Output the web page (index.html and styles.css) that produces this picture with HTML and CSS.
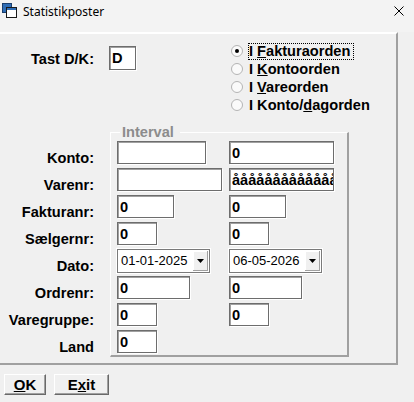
FILE: index.html
```html
<!DOCTYPE html>
<html lang="da">
<head>
    <meta charset="UTF-8">
    <meta name="viewport" content="width=device-width, initial-scale=1.0">
    <title>Statistikposter</title>
    <link rel="stylesheet" href="styles.css">
</head>
<body>
    <div class="titlebar">
        <svg class="app-icon" viewBox="0 0 16 16" width="16" height="16">
            <rect x="0.5" y="0.5" width="9" height="9" fill="#2f6db5" stroke="#1b3f6e"/>
            <rect x="4.5" y="4.5" width="10" height="10" fill="#fff" stroke="#1a1a1a"/>
            <rect x="5" y="5" width="9" height="2" fill="#2f6db5"/>
        </svg>
        <span class="title">Statistikposter</span>
        <svg class="close" viewBox="0 0 10 10" width="10" height="10">
            <path d="M0.5 0.5 L9.5 9.5 M9.5 0.5 L0.5 9.5" stroke="#000" stroke-width="1" fill="none"/>
        </svg>
    </div>

    <div class="panel">
        <div class="top">
            <label for="dk" class="label tast-label">Tast D/K:</label>
            <input type="text" id="dk" class="field tast" value="D">
            <ul class="radios">
                <li class="radio checked"><span class="dot"></span><span class="radio-text focus">I <u>F</u>akturaorden</span></li>
                <li class="radio"><span class="dot"></span><span class="radio-text">I <u>K</u>ontoorden</span></li>
                <li class="radio"><span class="dot"></span><span class="radio-text">I <u>V</u>areorden</span></li>
                <li class="radio"><span class="dot"></span><span class="radio-text">I Konto/<u>d</u>agorden</span></li>
            </ul>
        </div>

        <div class="filters">
            <div class="labels">
                <span>Konto:</span>
                <span>Varenr:</span>
                <span>Fakturanr:</span>
                <span>Sælgernr:</span>
                <span>Dato:</span>
                <span>Ordrenr:</span>
                <span>Varegruppe:</span>
                <span>Land</span>
            </div>

            <fieldset class="interval">
                <legend>Interval</legend>
                <div class="grid">
                    <input type="text" class="field w89" value="">
                    <input type="text" class="field w105" value="0">

                    <input type="text" class="field w105" value="">
                    <input type="text" class="field w105" value="åååååååååååååååå">

                    <input type="text" class="field w57" value="0">
                    <input type="text" class="field w57" value="0">

                    <input type="text" class="field w40" value="0">
                    <input type="text" class="field w40" value="0">

                    <div class="combo">
                        <span class="combo-value">01-01-2025</span>
                        <span class="drop"><svg viewBox="0 0 7 4" width="7" height="4"><polygon points="0,0 7,0 3.5,4" fill="#000"/></svg></span>
                    </div>
                    <div class="combo">
                        <span class="combo-value">06-05-2026</span>
                        <span class="drop"><svg viewBox="0 0 7 4" width="7" height="4"><polygon points="0,0 7,0 3.5,4" fill="#000"/></svg></span>
                    </div>

                    <input type="text" class="field w73" value="0">
                    <input type="text" class="field w73" value="0">

                    <input type="text" class="field w40" value="0">
                    <input type="text" class="field w40" value="0">

                    <input type="text" class="field w40" value="0">
                </div>
            </fieldset>
        </div>
    </div>

    <div class="buttons">
        <button type="button" class="btn btn-ok"><u>O</u>K</button>
        <button type="button" class="btn btn-exit">E<u>x</u>it</button>
    </div>
</body>
</html>
```

FILE: styles.css
```css
body {
    margin: 0;
    background-color: #f0f0f0;
    font-family: "Liberation Sans", Arial, sans-serif;
    font-size: 14.6px;
    font-weight: bold;
    color: #000;
}
.titlebar {
    display: flex;
    align-items: flex-start;
    height: 32px;
    background-color: #f3f3f3;
}
.app-icon {
    margin: 3px 0 0 2px;
}
.title {
    margin: 4px 0 0 5px;
    font-family: "Noto Sans", sans-serif;
    font-weight: normal;
    font-size: 12px;
    line-height: 16px;
}
.close {
    margin: 6px 10px 0 auto;
}
.panel {
    width: 396px;
    height: 329px;
    border-top: 2px solid #fff;
    border-right: 2px solid #a0a0a0;
    border-bottom: 2px solid #a0a0a0;
}
.top {
    display: flex;
    align-items: flex-start;
}
.tast-label {
    display: block;
    width: 94px;
    margin-top: 17px;
    text-align: right;
    line-height: 16px;
}
.field {
    box-sizing: border-box;
    height: 23px;
    margin: 0;
    padding: 0 0 0 2px;
    border: 1px solid #6d6d6d;
    box-shadow: inset 1px 1px 0 #a0a0a0, 1px 1px 0 #fff;
    background-color: #fff;
    font-family: "Liberation Sans", Arial, sans-serif;
    font-size: 14.6px;
    font-weight: bold;
    color: #000;
    outline: none;
}
.tast {
    width: 27px;
    height: 24px;
    margin: 12px 0 0 15px;
}
.radios {
    list-style: none;
    margin: 8px 0 0 95px;
    padding: 0;
}
.radio {
    display: flex;
    align-items: center;
    height: 18px;
}
.dot {
    position: relative;
    box-sizing: border-box;
    width: 12px;
    height: 12px;
    margin-right: 5px;
    border: 1px solid #b4b4b4;
    border-radius: 50%;
    background-color: #fafafa;
}
.checked .dot::after {
    content: "";
    position: absolute;
    left: 3px;
    top: 3px;
    width: 4px;
    height: 4px;
    border-radius: 50%;
    background-color: #000;
}
.radio-text {
    line-height: 15px;
    padding: 0 3px 0 0;
    border: 1px dotted transparent;
}
.radio-text.focus {
    border-color: #000;
}
.filters {
    display: flex;
    align-items: flex-start;
    margin-top: 10px;
}
.labels {
    display: flex;
    flex-direction: column;
    align-items: flex-end;
    gap: 4px;
    width: 94px;
    padding-top: 23px;
}
.labels span {
    height: 23px;
    line-height: 23px;
}
.interval {
    box-sizing: border-box;
    width: 239px;
    min-width: 0;
    margin: 0 0 0 16px;
    padding: 1px 0 2px 6px;
    border-style: solid;
    border-width: 1px 2px 2px 1px;
    border-color: #fff #a0a0a0 #a0a0a0 #fff;
}
.interval legend {
    margin-left: 3px;
    padding: 0 6px 0 2px;
    line-height: 16px;
    color: #8c8c8c;
}
.grid {
    display: grid;
    grid-template-columns: 112px auto;
    grid-auto-rows: 23px;
    row-gap: 4px;
    justify-items: start;
}
.w40 { width: 40px; }
.w57 { width: 57px; }
.w73 { width: 73px; }
.w89 { width: 89px; }
.w105 { width: 105px; }
.combo {
    box-sizing: border-box;
    display: flex;
    width: 93px;
    height: 24px;
    border: 1px solid #7a7a7a;
    box-shadow: 0 0 0 1px #fff;
    background-color: #fff;
}
.combo-value {
    flex: 1;
    padding-left: 3px;
    font-weight: normal;
    font-size: 13px;
    line-height: 22px;
}
.drop {
    display: flex;
    align-items: center;
    justify-content: center;
    width: 15px;
    margin: 1px 1px 1px 0;
    background-color: #f0f0f0;
    box-shadow: inset -1px -1px 0 #a0a0a0, inset 1px 1px 0 #fff;
}
.buttons {
    display: flex;
    gap: 8px;
    padding: 9px 0 0 4px;
}
.btn {
    box-sizing: border-box;
    height: 21px;
    padding: 0;
    border: 1px solid;
    border-color: #fff #696969 #696969 #fff;
    box-shadow: inset -1px -1px 0 #a0a0a0;
    background-color: #f0f0f0;
    font-family: "Liberation Sans", Arial, sans-serif;
    font-size: 15px;
    font-weight: bold;
    color: #000;
}
.btn-ok {
    width: 42px;
}
.btn-exit {
    width: 55px;
}
```
